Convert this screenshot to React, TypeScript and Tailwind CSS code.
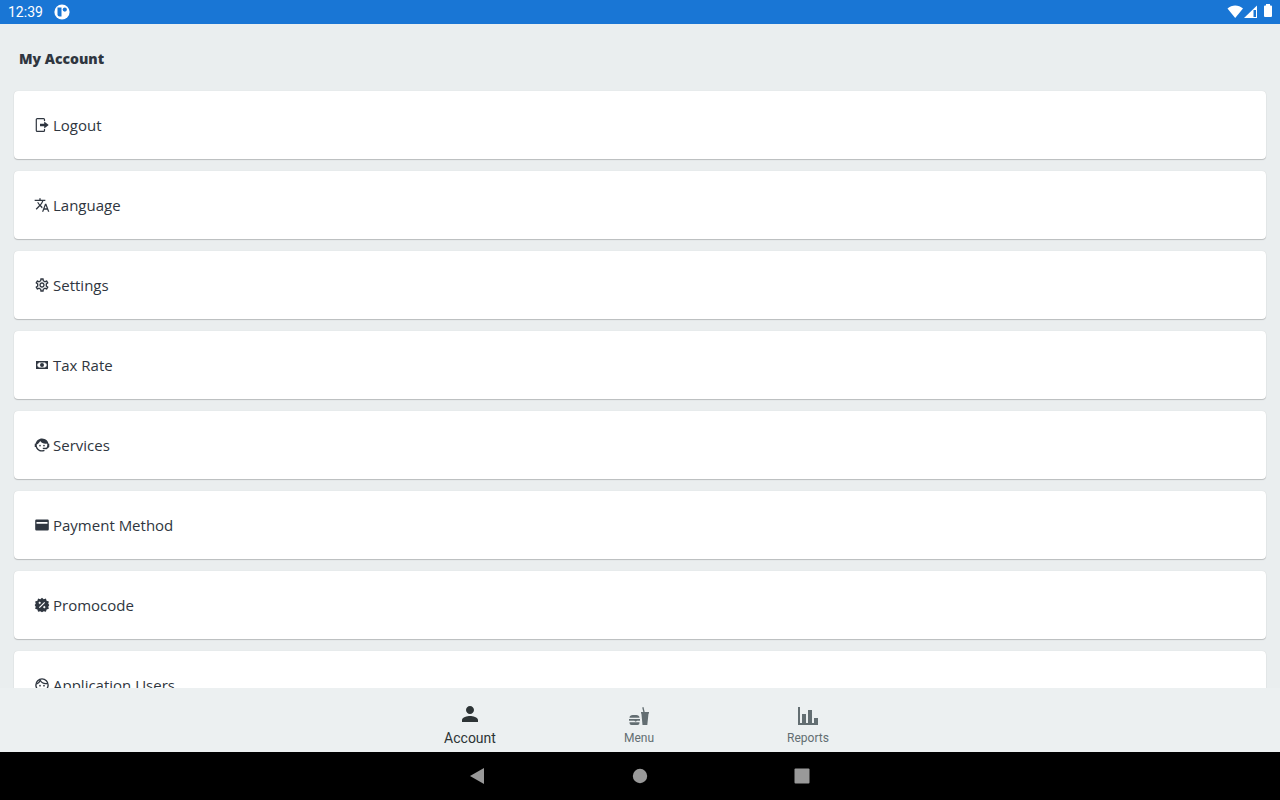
import type { ReactNode } from 'react';
import { MdOutlineSettings, MdPerson, MdTranslate } from 'react-icons/md';

type Item = {
  label: string;
  icon: ReactNode;
};

function LogoutIcon() {
  return (
    <svg viewBox="0 0 14 14" className="size-3.5" fill="none" stroke="currentColor">
      <path d="M9.500 3V1.600A.9.900 0 0 0 8.600.7H2.200a.9.900 0 0 0-.9.900v10.800a.9.900 0 0 0 .9.900h6.400a.9.900 0 0 0 .9-.9V11" strokeWidth="1.200" />
      <path d="M5 5.800h4.200V3.500L13.700 7l-4.500 3.500V8.200H5z" fill="currentColor" stroke="none" />
    </svg>
  );
}

function CashIcon() {
  return (
    <svg viewBox="0 0 14 14" className="size-3.5" fill="currentColor">
      <path
        fillRule="evenodd"
        d="M1 3h12v8H1zM3.8 4.4A1.6 1.6 0 0 1 2.4 5.7v2.6a1.6 1.6 0 0 1 1.400 1.300h6.400a1.600 1.600 0 0 1 1.400-1.300V5.700a1.600 1.600 0 0 1-1.400-1.300z"
      />
      <circle cx="7" cy="7" r="2" />
    </svg>
  );
}

function AgentIcon() {
  return (
    <svg viewBox="1 1 22 22" className="size-4" fill="currentColor">
      <path d="M18.72,14.76C19.07,13.91 19.26,13 19.26,12C19.26,11.28 19.15,10.59 18.96,9.95C18.31,10.1 17.63,10.18 16.92,10.18C13.86,10.18 11.15,8.67 9.5,6.34C8.61,8.5 6.91,10.26 4.77,11.22C4.73,11.47 4.73,11.74 4.73,12A7.27,7.27 0 0,0 12,19.27C13.05,19.27 14.06,19.04 14.97,18.63C15.54,19.72 15.8,20.26 15.78,20.26C14.14,20.81 12.87,21.08 12,21.08C9.58,21.08 7.27,20.13 5.57,18.42C4.53,17.38 3.76,16.11 3.33,14.73H2V10.18H3.09C3.93,6.04 7.6,2.92 12,2.92C14.4,2.92 16.71,3.87 18.42,5.58C19.69,6.84 20.54,8.45 20.89,10.18H22V14.73H21.94L18.38,18L13.08,17.4V15.73H17.91L18.72,14.76Z" />
      <circle cx="9.27" cy="12.91" r="1.14" />
      <circle cx="14.72" cy="12.91" r="1.14" />
    </svg>
  );
}

function CardIcon() {
  return (
    <svg viewBox="0 0 14 14" className="size-3.5" fill="currentColor">
      <path
        fillRule="evenodd"
        d="M1.4 1.6h11.2a1.2 1.2 0 0 1 1.2 1.2v8.4a1.2 1.2 0 0 1-1.2 1.2H1.4a1.2 1.2 0 0 1-1.2-1.2V2.8a1.2 1.2 0 0 1 1.2-1.2zM1.5 4v1.8h11V4z"
      />
    </svg>
  );
}

function PromoIcon() {
  return (
    <svg viewBox="0 0 24 24" className="size-4" fill="currentColor">
      <path d="M12 1l2.600 2.300 3.300-.9 1 3.300 3.400 1-.9 3.300L23 12l-1.600 2.500.9 3.300-3.400 1-1 3.300-3.300-.9L12 23l-2.600-1.800-3.300.9-1-3.300-3.400-1 .9-3.300L1 12l1.600-2-.9-3.300 3.400-1 1-3.300 3.300.9z" />
      <g stroke="#fff" fill="#fff">
        <path d="M8 16l8-8" strokeWidth="1.8" />
        <circle cx="8.5" cy="8.8" r="1.2" />
        <circle cx="15.5" cy="15.2" r="1.2" />
      </g>
    </svg>
  );
}

function FaceIcon() {
  return (
    <svg viewBox="0 0 24 24" className="size-4" fill="none" stroke="currentColor" strokeWidth="2">
      <circle cx="12" cy="12" r="9.2" />
      <path d="M3.5 10.8C6.5 9.7 8.7 7.3 9.7 4.2M9 4.5c2.3 4.3 6.8 6.2 11.8 5.2" />
      <circle cx="9" cy="13" r="1.25" fill="currentColor" stroke="none" />
      <circle cx="15" cy="13" r="1.25" fill="currentColor" stroke="none" />
    </svg>
  );
}

function MenuIcon() {
  return (
    <svg viewBox="0 0 20 20" className="size-5" fill="currentColor">
      <path d="M.5 11.8C.5 10 2 9 3.7 9h3.600c1.700 0 3.200 1 3.200 2.800zM0 13h11v1.800H8l-1.200 1-1.500-1H0zM.5 16.200h10V17a2 2 0 0 1-2 2h-6a2 2 0 0 1-2-2z" />
      <path d="M12 6h2.300L13.200 1.500l1.300-.4L15.700 6H20v1.500h-.5L18.300 19h-4.800L12.400 7.500H12z" />
    </svg>
  );
}

function ReportsIcon() {
  return (
    <svg viewBox="0 0 20 20" className="size-5" fill="currentColor">
      <path d="M0 1h2v16h2V8h4v9h2V4h4v13h2v-5h4v7H0z" />
    </svg>
  );
}

const items: Item[] = [
  { label: 'Logout', icon: <LogoutIcon /> },
  { label: 'Language', icon: <MdTranslate className="size-4" /> },
  { label: 'Settings', icon: <MdOutlineSettings className="size-4" /> },
  { label: 'Tax Rate', icon: <CashIcon /> },
  { label: 'Services', icon: <AgentIcon /> },
  { label: 'Payment Method', icon: <CardIcon /> },
  { label: 'Promocode', icon: <PromoIcon /> },
  { label: 'Application Users', icon: <FaceIcon /> },
];

function StatusBar() {
  return (
    <header className="flex h-6 shrink-0 items-center justify-between bg-[#1976d5] px-2 text-white">
      <div className="flex items-center gap-[11px]">
        <span className="text-sm leading-6">12:39</span>
        <svg viewBox="0 0 16 16" className="size-4">
          <circle cx="8" cy="8" r="7.6" fill="#fff" />
          <path d="M3.5 3.5h4v9H5.5a2 2 0 0 1-2-2z" fill="#1976d5" />
          <circle cx="10.8" cy="5.6" r="2.1" fill="#1976d5" />
        </svg>
      </div>
      <svg viewBox="0 0 46 16" className="h-4 w-[46px]" fill="#fff">
        <path d="M1.5 4.500C5.800.6 12.500.6 17 4.500L9.200 14z" />
        <path d="M18 14L31 1.500V14z" />
        <path d="M27.500 6H30v7h-2.500z" fill="#1976d5" />
        <path d="M38 2.500A1 1 0 0 1 39 1.500h1V0h4v1.500h1a1 1 0 0 1 1 1V12a1 1 0 0 1-1 1h-6a1 1 0 0 1-1-1z" />
      </svg>
    </header>
  );
}

export default function App() {
  return (
    <div className="flex h-screen flex-col bg-[#eaeeef] font-['Roboto',sans-serif]">
      <StatusBar />

      <main className="min-h-0 flex-1 [scrollbar-width:none] overflow-y-auto px-3.5 font-['Open_Sans','Noto_Sans',sans-serif] text-[#2f3640]">
        <h1 className="px-[5px] pt-[25px] pb-[22px] text-sm leading-5 font-extrabold">My Account</h1>
        <ul className="flex flex-col gap-3 pb-3">
          {items.map((item) => (
            <li key={item.label}>
              <button
                type="button"
                className="flex h-[68px] w-full items-center gap-[3px] rounded-sm bg-white px-5 text-left text-[15px] leading-6 shadow-[0_1px_1px_rgba(0,0,0,0.2),0_0_1px_rgba(0,0,0,0.15)]"
              >
                <span className="flex w-4 justify-center">{item.icon}</span>
                {item.label}
              </button>
            </li>
          ))}
        </ul>
      </main>

      <nav className="flex h-16 shrink-0 justify-center bg-[#ecf0f1] pr-0.5 text-[#636e72]">
        <button type="button" className="flex w-[169px] flex-col items-center pt-3.5 text-[#2d3436]">
          <MdPerson className="size-6" />
          <span className="text-sm leading-6">Account</span>
        </button>
        <button type="button" className="flex w-[169px] flex-col items-center gap-1 pt-[18px]">
          <MenuIcon />
          <span className="text-xs leading-4">Menu</span>
        </button>
        <button type="button" className="flex w-[169px] flex-col items-center gap-1 pt-[18px]">
          <ReportsIcon />
          <span className="text-xs leading-4">Reports</span>
        </button>
      </nav>

      <footer className="flex h-12 shrink-0 items-center justify-center gap-[146px] bg-black text-[#999]">
        <button type="button" aria-label="Back">
          <svg viewBox="0 0 16 16" className="size-4" fill="currentColor">
            <path d="M0 8L14 0v16z" />
          </svg>
        </button>
        <button type="button" aria-label="Home">
          <svg viewBox="0 0 16 16" className="size-4" fill="currentColor">
            <circle cx="8" cy="8" r="7.2" />
          </svg>
        </button>
        <button type="button" aria-label="Overview">
          <svg viewBox="0 0 16 16" className="size-4" fill="currentColor">
            <rect x="0.5" y="0.5" width="15" height="15" rx="1" />
          </svg>
        </button>
      </footer>
    </div>
  );
}
